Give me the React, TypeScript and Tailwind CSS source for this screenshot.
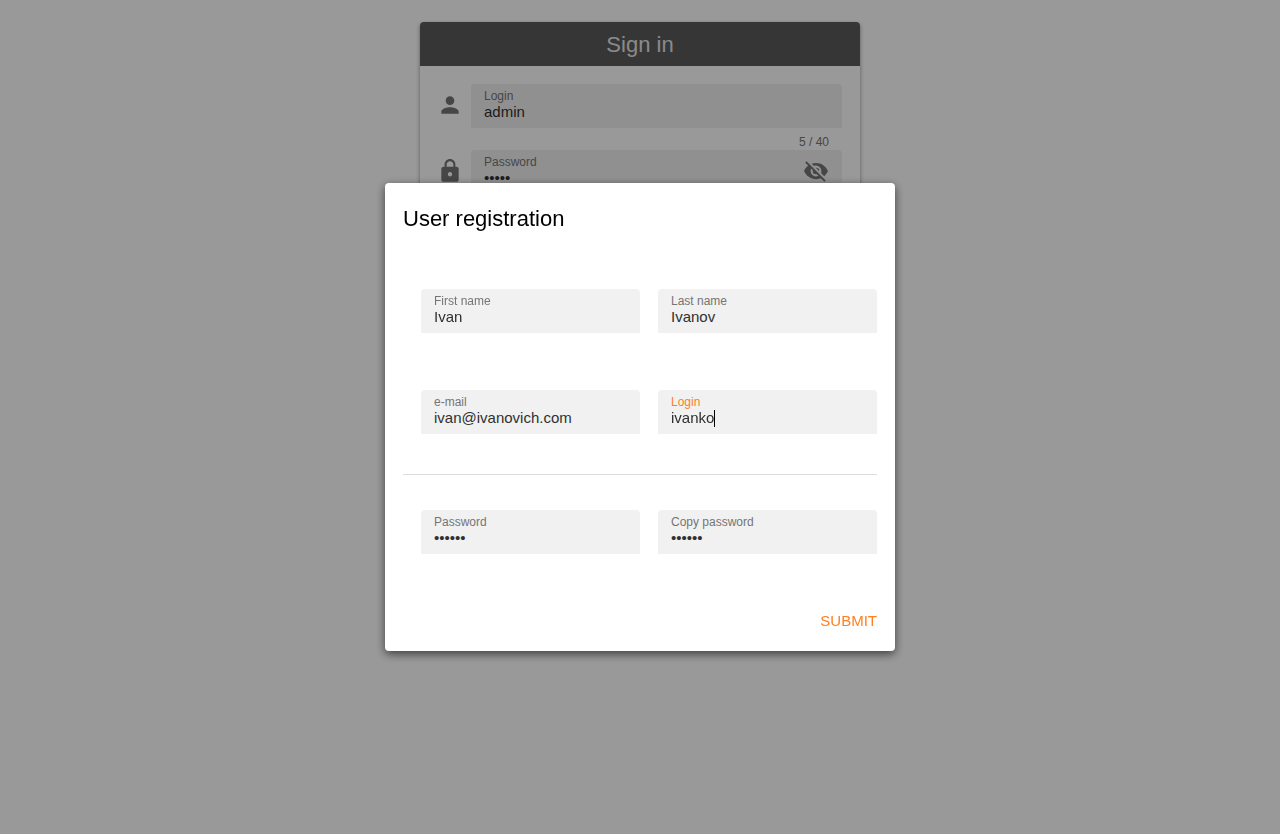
import { useState } from "react";
import { MdLock, MdPerson } from "react-icons/md";

type FieldProps = {
  id: string;
  label: string;
  initial: string;
  type?: string;
  active?: boolean;
  children?: React.ReactNode;
};

function EyeOffIcon() {
  return (
    <svg viewBox="0 0 24 24" className="h-[26px] w-[26px]" fill="currentColor" aria-hidden="true">
      <path d="M11.83,9L15,12.16C15,12.11 15,12.05 15,12A3,3 0 0,0 12,9C11.94,9 11.89,9 11.83,9M7.53,9.8L9.08,11.35C9.03,11.56 9,11.77 9,12A3,3 0 0,0 12,15C12.22,15 12.44,14.97 12.65,14.92L14.2,16.47C13.53,16.8 12.79,17 12,17A5,5 0 0,1 7,12C7,11.21 7.2,10.47 7.53,9.8M2,4.27L4.28,6.55L4.73,7C3.08,8.3 1.78,10 1,12C2.73,16.39 7,19.5 12,19.5C13.55,19.5 15.03,19.2 16.38,18.66L16.81,19.08L19.73,22L21,20.73L3.27,3M12,7A5,5 0 0,1 17,12C17,12.64 16.87,13.26 16.64,13.82L19.57,16.75C21.07,15.5 22.27,13.86 23,12C21.27,7.61 17,4.5 12,4.5C10.6,4.5 9.26,4.75 8,5.2L10.17,7.35C10.74,7.13 11.35,7 12,7Z" />
    </svg>
  );
}

function Field({ id, label, initial, type = "text", active = false, children }: FieldProps) {
  const [value, setValue] = useState(initial);
  return (
    <div className="flex h-11 min-w-0 items-center rounded-t bg-[#f1f1f1] px-[13px] pb-1">
      <div className="min-w-0 flex-1">
        <label
          htmlFor={id}
          className={active ? "block text-xs leading-4 text-[#ff7f1e]" : "block text-xs leading-4 text-[#757575]"}
        >
          {label}
        </label>
        <div className="flex h-4 items-center">
          <input
            id={id}
            type={type}
            value={value}
            onChange={(e) => setValue(e.target.value)}
            className={
              active
                ? "h-4 bg-transparent text-[15px] leading-4 text-[#303030] caret-transparent outline-none [field-sizing:content]"
                : "h-4 w-full bg-transparent text-[15px] leading-4 text-[#303030] outline-none"
            }
          />
          {active && <span className="h-[17px] w-px shrink-0 bg-black" />}
        </div>
      </div>
      {children}
    </div>
  );
}

function SignIn() {
  return (
    <main className="flex justify-center px-4 pt-[22px]">
      <section className="w-full max-w-[440px] overflow-hidden rounded bg-white pb-6 shadow-[0_2px_4px_rgba(0,0,0,0.4)]">
        <h1 className="bg-[#5a5a5a] pt-px text-center text-[22px] leading-[43px] text-[#e6e6e6]">Sign in</h1>
        <form className="px-[18px] pt-[18px]">
          <div className="grid grid-cols-[24px_1fr] gap-x-[9px]">
            <div className="flex h-11 items-center justify-center pb-0.5 text-[#757575]">
              <MdPerson size={26} className="shrink-0" />
            </div>
            <Field id="signin-login" label="Login" initial="admin" />
            <p className="col-start-2 h-[22px] px-[13px] pt-1.5 text-right text-xs leading-4 text-[#757575]">5 / 40</p>
            <div className="flex h-11 items-center justify-center pb-0.5 text-[#757575]">
              <MdLock size={26} className="shrink-0" />
            </div>
            <Field id="signin-password" label="Password" initial="admin" type="password">
              <button type="button" aria-label="Show password" className="pt-0.5 text-[#757575]">
                <EyeOffIcon />
              </button>
            </Field>
          </div>
        </form>
      </section>
    </main>
  );
}

function Registration() {
  return (
    <div className="fixed inset-0 flex items-center justify-center bg-black/40 p-4">
      <section
        role="dialog"
        aria-modal="true"
        aria-labelledby="registration-title"
        className="w-full max-w-[510px] rounded bg-white px-[18px] pt-[18px] pb-3 shadow-[0_3px_10px_rgba(0,0,0,0.6)]"
      >
        <h2 id="registration-title" className="text-[22px] leading-9 text-black">
          User registration
        </h2>
        <form onSubmit={(e) => e.preventDefault()}>
          <div className="mt-[52px] grid grid-cols-2 gap-x-[18px] gap-y-[57px] pl-[18px]">
            <Field id="first-name" label="First name" initial="Ivan" />
            <Field id="last-name" label="Last name" initial="Ivanov" />
            <Field id="email" label="e-mail" initial="ivan@ivanovich.com" />
            <Field id="login" label="Login" initial="ivanko" active />
          </div>
          <hr className="mt-10 border-[#dedede]" />
          <div className="mt-[35px] grid grid-cols-2 gap-x-[18px] pl-[18px]">
            <Field id="password" label="Password" initial="ivanko" type="password" />
            <Field id="copy-password" label="Copy password" initial="ivanko" type="password" />
          </div>
          <div className="mt-[50px] flex justify-end">
            <button type="submit" className="h-[35px] text-[15px] text-[#ff7f1e]">
              SUBMIT
            </button>
          </div>
        </form>
      </section>
    </div>
  );
}

export default function App() {
  return (
    <div className="min-h-screen bg-white font-['Liberation_Sans',Arial,sans-serif]">
      <SignIn />
      <Registration />
    </div>
  );
}
